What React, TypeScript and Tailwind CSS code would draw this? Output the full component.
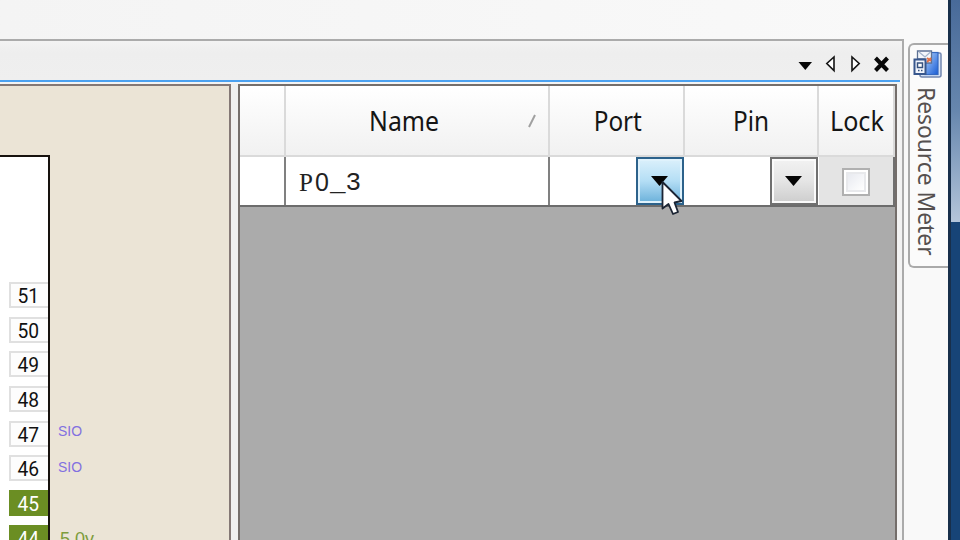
import React from "react";

const pins = [51, 50, 49, 48, 47, 46, 45, 44];

function PinRow({ pin }: { pin: number }) {
  const active = pin <= 45;
  return (
    <div className="flex h-[34.7px] shrink-0 items-start">
      <div
        className={
          "ml-[9px] flex h-[26px] w-[39px] shrink-0 items-center justify-center border-2 border-r-0 font-['Roboto',sans-serif] text-[20px] leading-none " +
          (active ? "border-[#6b8e23] bg-[#6b8e23] text-white" : "border-[#e0e0e0] bg-[#fdfdfd] text-[#111]")
        }
      >
        <span className="-translate-x-px translate-y-px scale-x-[0.96]">{pin}</span>
      </div>
    </div>
  );
}

function PinCanvas() {
  return (
    <div className="flex w-[231px] shrink-0 overflow-hidden border-t-2 border-r-2 border-[#847875] bg-[#ebe4d6]">
      <div className="mt-[69px] h-[420px] w-[50px] shrink-0 overflow-hidden border-t-2 border-r-2 border-[#17120e] bg-white pt-[125px]">
        {pins.map((p) => (
          <PinRow key={p} pin={p} />
        ))}
      </div>
      <div className="flex flex-col pl-[8px] pt-[337px] font-['Liberation_Sans',sans-serif] text-[15.500px] leading-[16px] text-[#8270e0]">
        <span className="h-[36px] shrink-0 origin-left scale-x-[0.9]">SIO</span>
        <span className="h-[71px] shrink-0 origin-left scale-x-[0.9]">SIO</span>
        <span className="shrink-0 pl-[2px] text-[18px] leading-[18px] text-[#7d9c3c]">5.0v</span>
      </div>
    </div>
  );
}

function Header({ children }: { children?: React.ReactNode }) {
  return (
    <div className="relative flex items-center justify-center border-r-2 border-b-2 border-[#dadada] bg-linear-to-b from-white to-[#f1f1f1] font-['Noto_Sans',sans-serif] text-[27px] leading-none text-[#151515]">
      {children}
    </div>
  );
}

function DropButton({ hot }: { hot?: boolean }) {
  return (
    <div
      className={
        "mr-px ml-auto flex w-[48px] items-center justify-center border-2 " +
        (hot ? "border-[#2c628b] bg-[#dff2fc] p-[2px]" : "border-[#707070] bg-[#fafafa] p-[2px]")
      }
    >
      <div
        className={
          "flex size-full items-center justify-center bg-linear-to-b from-0% " +
          (hot
            ? "from-[#d8effb] via-[#b4def5] via-50% to-[#70b4dc]"
            : "from-[#f1f1f1] via-[#e5e5e5] via-50% to-[#cfcfcf]")
        }
      >
        <svg width="17" height="10" viewBox="0 0 17 10" className="-translate-x-px">
          <path d="M0 0H17L8.500 10Z" fill="#050505" />
        </svg>
      </div>
    </div>
  );
}

function PinTable() {
  return (
    <div className="flex w-[659px] shrink-0 flex-col border-x-2 border-t-2 border-[#746e6b] bg-[#ababab]">
      <div className="grid h-[71px] shrink-0 grid-cols-[46px_264px_135px_134px_76px]">
        <Header />
        <Header>
          <span className="-translate-x-[13px] scale-x-[0.92]">Name</span>
          <svg width="8" height="14" className="absolute right-[12px] top-[28px]">
            <path d="M1 13L7 1" stroke="#a0a0a0" strokeWidth="2" />
          </svg>
        </Header>
        <Header>
          <span className="translate-x-px scale-x-[0.9]">Port</span>
        </Header>
        <Header>
          <span className="scale-x-[0.9]">Pin</span>
        </Header>
        <Header>
          <span className="translate-x-px scale-x-[0.93]">Lock</span>
        </Header>
      </div>
      <div className="grid h-[50px] shrink-0 grid-cols-[46px_264px_135px_134px_76px] border-b-2 border-[#6c6c6c]">
        <div className="border-r-2 border-[#808080] bg-white" />
        <div className="flex items-center border-r-2 border-[#808080] bg-white pt-[3px] pl-[12px] font-['Liberation_Mono',monospace] text-[26px] leading-none text-[#222]">
          <span className="w-[16px] text-center font-['Liberation_Serif',serif] text-[25px]">P</span>
          <span className="w-[16px] text-center font-['Liberation_Sans',sans-serif] text-[25px]">0</span>
          <span>_3</span>
        </div>
        <div className="flex bg-white">
          <DropButton hot />
        </div>
        <div className="flex bg-white">
          <DropButton />
        </div>
        <div className="flex items-center justify-center border-r-2 border-[#707070] bg-[#e4e4e4] pt-[2px]">
          <div className="size-[28px] border-2 border-[#b0b0b0] bg-white p-[2px]">
            <div className="size-full border-2 border-[#e8e9ec] bg-linear-to-br from-[#e8eaf0] to-white" />
          </div>
        </div>
      </div>
    </div>
  );
}

function TitleBar() {
  return (
    <div className="flex h-[39px] shrink-0 items-center justify-end bg-linear-to-b from-[#f3f3f3] via-[#eeeeee] via-30% to-[#efefef] pt-[6px] pr-[12px]">
      <svg width="92" height="20" viewBox="798 54 92 20">
        <path d="M798.500 62H812L805.300 70Z" fill="#080808" />
        <path d="M834 57V70.500L826.800 63.500Z" fill="#fff" stroke="#151515" strokeWidth="1.600" />
        <path d="M852 57V70.500L859.200 63.500Z" fill="#fff" stroke="#151515" strokeWidth="1.600" />
        <path d="M875.500 58L887.500 70.500M887.500 58L875.500 70.500" stroke="#080808" strokeWidth="4" />
      </svg>
    </div>
  );
}

function MeterIcon() {
  return (
    <svg width="30" height="30" viewBox="0 0 30 30" className="mt-[4px] ml-[3px] shrink-0">
      <defs>
        <linearGradient id="page" x1="0" y1="0" x2="1" y2="1">
          <stop offset="0" stopColor="#b5d5fc" />
          <stop offset="1" stopColor="#175bd5" />
        </linearGradient>
      </defs>
      <path d="M23 4H26.500Q28 4 28 5.500V26Q28 28 26 28H9Q7 28 7 26V23" fill="#d5e2f6" stroke="#7286b0" strokeWidth="1.500" />
      <rect x="12" y="3.500" width="13" height="22" fill="url(#page)" stroke="#3468c0" strokeWidth="1.200" />
      <path d="M4.500 2H18.500V14H12V10H4.500Z" fill="#f4f7fc" stroke="#5d7295" strokeWidth="1.300" />
      <path d="M6 3L12 8L17.500 3" fill="none" stroke="#a5b5cc" strokeWidth="1.300" />
      <path d="M14 9L18 12M18 9L14 13" stroke="#e07048" strokeWidth="2" />
      <path d="M1.500 10.500H12.500V25H1.500Z" fill="#f3f6fd" stroke="#38578d" strokeWidth="2" />
      <rect x="4.500" y="14" width="5" height="4.500" fill="#fff" stroke="#36527f" strokeWidth="1.500" />
      <path d="M5 21.500H6.500M8 21.500H9.500" stroke="#36527f" strokeWidth="1.500" />
    </svg>
  );
}

function SideStrip() {
  return (
    <div className="flex w-[44px] shrink-0 flex-col bg-[#f9f9f9] pl-[4px] pt-[43px]">
      <div className="flex h-[225px] flex-col items-start rounded-l-[6px] border-2 border-r-0 border-[#aaa] bg-[#fbfbfb]">
        <MeterIcon />
        <div className="mt-[8px] ml-[3px] origin-top scale-y-[0.95] whitespace-nowrap font-['Noto_Sans',sans-serif] text-[24px] leading-[28px] text-[#55504f] [writing-mode:vertical-rl]">
          Resource Meter
        </div>
      </div>
    </div>
  );
}

export default function App() {
  return (
    <div className="relative flex h-[540px] w-[960px] overflow-hidden bg-[#f8f8f8]">
      <div className="flex w-[904px] shrink-0 flex-col">
        <div className="h-[39px] shrink-0 bg-linear-to-r from-[#f4f4f4] to-[#f9f9f9]" />
        <div className="flex min-h-0 flex-1 flex-col border-t-2 border-r-2 border-[#ababab]">
          <TitleBar />
          <div className="mr-[2px] h-[2px] shrink-0 bg-[#4ba1f0]" />
          <div className="flex min-h-0 flex-1 bg-[#f3f3f3] pt-[2px]">
            <PinCanvas />
            <div className="w-[7px] shrink-0 bg-[#efefef]" />
            <PinTable />
          </div>
        </div>
      </div>
      <SideStrip />
      <div className="flex w-[12px] flex-col border-l-[3px] border-[#182f4b]">
        <div className="h-[222px] bg-linear-to-b from-[#486a99] via-[#6787ae] via-50% to-[#b4c5da]" />
        <div className="flex-1 bg-[#174477]" />
      </div>
      <svg width="24" height="36" viewBox="0 0 24 36" className="absolute left-[660px] top-[180px]">
        <path d="M2.500 2V28.500L8.500 24L13 34L18 32L14.500 22.500L21.500 21Z" fill="#fff" stroke="#1b2433" strokeWidth="1.800" strokeLinejoin="round" />
      </svg>
    </div>
  );
}
